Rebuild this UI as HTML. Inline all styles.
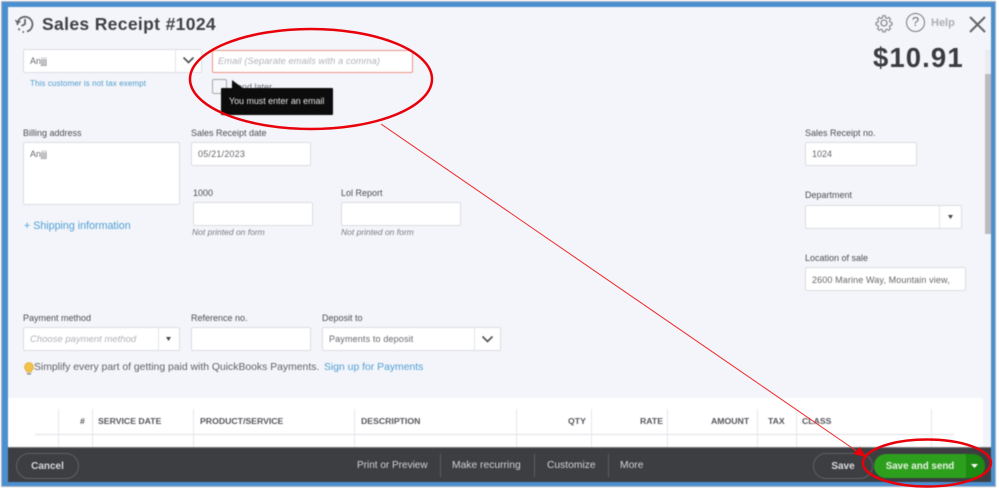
<!DOCTYPE html>
<html>
<head>
<meta charset="utf-8">
<style>
html,body{margin:0;padding:0;background:#fff}
#p{position:relative;width:999px;height:488px;overflow:hidden;background:#fff;font-family:"Liberation Sans",sans-serif;color:#6b6c72}
#f{position:absolute;left:0;top:0;width:999px;height:488px;filter:blur(.5px)}
.a{position:absolute;white-space:nowrap}
.i{position:absolute;box-sizing:border-box;background:#fff;border:1px solid #dcdde1;border-radius:2px}
.l{position:absolute;white-space:nowrap;font-size:9px;line-height:11px;color:#4c4d53;margin-top:1px}
.t{position:absolute;white-space:nowrap;font-size:9px;line-height:11px;color:#66676d;margin-top:1px}
.h{position:absolute;white-space:nowrap;font-size:8.7px;line-height:11px;font-weight:bold;color:#55565c;top:416px}
.n{position:absolute;white-space:nowrap;font-size:8.5px;font-style:italic;line-height:10px;color:#7a7b81}
.v{position:absolute;width:1px;background:#e6e7ea}
.b{position:absolute;white-space:nowrap;font-size:10.3px;line-height:12px;color:#d2d3d5;top:460px}
.s{position:absolute;width:1px;background:#5c5d60;top:454px;height:23px}
</style>
</head>
<body>
<div id="p">
<div id="f">
<div class="a" style="left:2px;top:2px;width:993px;height:484px;background:#4a8fd0;box-shadow:0 0 0 1px #a9b4bf"></div>
<div class="a" style="left:8px;top:7px;width:976px;height:440px;background:#f4f5fa"></div>
<div class="a" style="left:984px;top:7px;width:7px;height:440px;background:#f4f5fa"></div>
<div class="a" style="left:985px;top:74px;width:6px;height:160px;background:#bcbcbe"></div>
<div class="a" style="left:985px;top:50px;width:6px;height:24px;background:#ececee"></div>
<div class="a" style="left:8px;top:398px;width:975px;height:49px;background:#fff"></div>

<svg class="a" style="left:14px;top:13px" width="21" height="21" viewBox="0 0 21 21" fill="none" stroke="#5e5f64" stroke-width="1.7"><path d="M3.500 12A7.500 7.500 0 1 1 13 18.500"/><path d="M3 9.500 1.500 7M3.500 10 6.500 8.500" stroke-width="1.300"/><path d="M11 6v5l-3.500 2"/><path d="M4.500 15.500l1.500 2M8.500 19h1.500" stroke-dasharray="2 1.500"/></svg>
<div class="a" style="left:42px;top:13px;font-size:17.5px;line-height:22px;font-weight:bold;color:#404146;letter-spacing:.35px">Sales Receipt #1024</div>

<svg class="a" style="left:874px;top:13px" width="20" height="20" viewBox="0 0 20 20" fill="none" stroke="#77787d" stroke-width="1.100"><circle cx="10" cy="10" r="3"/><path d="M8.600 2h2.800l.4 2.200 1.600.7 1.900-1.300 2 2-1.300 1.900.7 1.600 2.200.4v2.800l-2.200.4-.7 1.600 1.300 1.900-2 2-1.900-1.300-1.600.7-.4 2.200H8.600l-.4-2.200-1.600-.7-1.900 1.300-2-2 1.300-1.900-.7-1.600-2.200-.4V9.600l2.200-.4.700-1.600-1.300-1.900 2-2 1.900 1.300 1.600-.7z" transform="translate(1 1) scale(.9)"/></svg>
<div class="a" style="left:906px;top:13px;width:19px;height:19px;box-sizing:border-box;border:1.500px solid #77787d;border-radius:50%;text-align:center;font-size:13px;line-height:16px;color:#6a6b70">?</div>
<div class="a" style="left:931px;top:16px;font-size:11px;line-height:14px;font-weight:bold;color:#adaeb2">Help</div>
<svg class="a" style="left:968px;top:15px" width="20" height="20" viewBox="0 0 20 20" stroke="#626368" stroke-width="2" fill="none"><path d="M2 2 17 17M17 2 2 17"/></svg>
<div class="a" style="left:873px;top:42px;font-size:27.500px;line-height:32px;font-weight:bold;color:#3a3b3f;letter-spacing:1.1px">$10.91</div>

<!-- customer -->
<div class="i" style="left:23px;top:49px;width:179px;height:24px"></div>
<div class="a" style="left:175px;top:50px;width:1px;height:22px;background:#e2e3e6"></div>
<svg class="a" style="left:182px;top:56px" width="13" height="9" viewBox="0 0 13 9" fill="none" stroke="#4d4e53" stroke-width="1.600"><path d="M1.500 1.500 6.500 6.500 11.500 1.500"/></svg>
<div class="t" style="left:30px;top:55px">Anjjj</div>
<div class="a" style="left:30px;top:79px;font-size:8px;line-height:10px;color:#4d9ccf;letter-spacing:.1px">This customer is not tax exempt</div>

<!-- email -->
<div class="i" style="left:212px;top:50px;width:201px;height:23px;border:1px solid #ee8f86"></div>
<div class="a" style="left:218px;top:56px;font-size:9.300px;line-height:11px;font-style:italic;color:#b0b1b7;letter-spacing:.08px">Email (Separate emails with a comma)</div>
<div class="i" style="left:212px;top:79px;width:15px;height:15px;border-color:#a5a6aa;background:#f4f5fa"></div>
<div class="t" style="left:231px;top:81px;color:#6a6b70">Send later</div>
<div class="a" style="left:221px;top:88px;width:112px;height:27px;background:#0c0c0c;border-radius:1px"></div>
<svg class="a" style="left:230px;top:80px" width="16" height="11" viewBox="0 0 16 11"><path d="M2 0 14 9 2 10z" fill="#0c0c0c"/></svg>
<div class="a" style="left:229px;top:96px;font-size:8.900px;line-height:11px;color:#e4e4e4">You must enter an email</div>

<!-- billing -->
<div class="l" style="left:23px;top:127px">Billing address</div>
<div class="i" style="left:23px;top:142px;width:157px;height:63px"></div>
<div class="t" style="left:30px;top:148px">Anjjj</div>
<div class="a" style="left:24px;top:220px;font-size:10.700px;line-height:13px;color:#4f9fd4">+ Shipping information</div>

<div class="l" style="left:191px;top:127px">Sales Receipt date</div>
<div class="i" style="left:191px;top:142px;width:120px;height:24px"></div>
<div class="t" style="left:198px;top:148px;letter-spacing:.2px">05/21/2023</div>

<div class="l" style="left:193px;top:187px">1000</div>
<div class="i" style="left:193px;top:202px;width:120px;height:24px"></div>
<div class="n" style="left:192px;top:227px">Not printed on form</div>

<div class="l" style="left:341px;top:187px">Lol Report</div>
<div class="i" style="left:341px;top:202px;width:120px;height:24px"></div>
<div class="n" style="left:341px;top:227px">Not printed on form</div>

<!-- right -->
<div class="l" style="left:805px;top:127px">Sales Receipt no.</div>
<div class="i" style="left:805px;top:142px;width:112px;height:24px"></div>
<div class="t" style="left:812px;top:148px">1024</div>
<div class="l" style="left:805px;top:189px">Department</div>
<div class="i" style="left:805px;top:205px;width:157px;height:24px"></div>
<div class="a" style="left:939px;top:206px;width:1px;height:22px;background:#e2e3e6"></div>
<svg class="a" style="left:947px;top:215px" width="7" height="5"><path d="M1 0h5L3.500 4z" fill="#45464a"/></svg>
<div class="l" style="left:805px;top:252px">Location of sale</div>
<div class="i" style="left:805px;top:267px;width:161px;height:24px"></div>
<div class="t" style="left:812px;top:274px;letter-spacing:.12px">2600 Marine Way, Mountain view,</div>

<!-- payment -->
<div class="l" style="left:23px;top:312px">Payment method</div>
<div class="i" style="left:23px;top:327px;width:157px;height:24px"></div>
<div class="a" style="left:158px;top:328px;width:1px;height:22px;background:#e2e3e6"></div>
<svg class="a" style="left:165px;top:337px" width="7" height="5"><path d="M1 0h5L3.500 4z" fill="#45464a"/></svg>
<div class="a" style="left:30px;top:334px;font-size:9.500px;line-height:11px;font-style:italic;color:#b0b1b7">Choose payment method</div>
<div class="l" style="left:191px;top:312px">Reference no.</div>
<div class="i" style="left:191px;top:327px;width:120px;height:24px"></div>
<div class="l" style="left:322px;top:312px">Deposit to</div>
<div class="i" style="left:322px;top:327px;width:179px;height:24px"></div>
<div class="a" style="left:474px;top:328px;width:1px;height:22px;background:#e2e3e6"></div>
<svg class="a" style="left:481px;top:335px" width="13" height="9" viewBox="0 0 13 9" fill="none" stroke="#4d4e53" stroke-width="1.600"><path d="M1.500 1.500 6.500 6.500 11.500 1.500"/></svg>
<div class="t" style="left:329px;top:333px;letter-spacing:.15px">Payments to deposit</div>

<svg class="a" style="left:24px;top:362px" width="10" height="14" viewBox="0 0 10 14"><path d="M5 .5a4.500 4.500 0 0 0-2.500 8.200V10h5V8.700A4.500 4.500 0 0 0 5 .5z" fill="#f2c14a" stroke="#d6a02c" stroke-width=".6"/><path d="M3 11h4v1.500H3z" fill="#8a8b8f"/></svg>
<div class="a" style="left:34px;top:361px;font-size:10.400px;line-height:13px;color:#606166">Simplify every part of getting paid with QuickBooks Payments.</div>
<div class="a" style="left:324px;top:361px;font-size:10.400px;line-height:13px;color:#4f9fd4">Sign up for Payments</div>

<!-- table -->
<div class="a" style="left:35px;top:434px;width:919px;height:1px;background:#dfe0e3"></div>
<div class="v" style="left:58px;top:409px;height:38px"></div>
<div class="v" style="left:92px;top:409px;height:38px"></div>
<div class="v" style="left:193px;top:409px;height:38px"></div>
<div class="v" style="left:354px;top:409px;height:38px"></div>
<div class="v" style="left:516px;top:409px;height:38px"></div>
<div class="v" style="left:591px;top:409px;height:38px"></div>
<div class="v" style="left:667px;top:409px;height:38px"></div>
<div class="v" style="left:757px;top:409px;height:38px"></div>
<div class="v" style="left:796px;top:409px;height:38px"></div>
<div class="v" style="left:931px;top:409px;height:38px"></div>
<div class="h" style="left:80px">#</div>
<div class="h" style="left:98px">SERVICE DATE</div>
<div class="h" style="left:200px">PRODUCT/SERVICE</div>
<div class="h" style="left:361px">DESCRIPTION</div>
<div class="h" style="left:568px">QTY</div>
<div class="h" style="left:640px">RATE</div>
<div class="h" style="left:711px">AMOUNT</div>
<div class="h" style="left:768px">TAX</div>
<div class="h" style="left:802px">CLASS</div>

<!-- footer -->
<div class="a" style="left:8px;top:447px;width:983px;height:35px;background:#3d3e42;border-top:1px solid #77787a;box-sizing:border-box"></div>
<div class="a" style="left:16px;top:453px;width:63px;height:26px;box-sizing:border-box;border:1px solid #5f6063;border-radius:13px;text-align:center;font-size:10px;line-height:26px;font-weight:bold;color:#d8d8d8">Cancel</div>
<div class="b" style="left:357px;font-size:10px">Print or Preview</div>
<div class="s" style="left:440px"></div>
<div class="b" style="left:452px">Make recurring</div>
<div class="s" style="left:534px"></div>
<div class="b" style="left:547px">Customize</div>
<div class="s" style="left:608px"></div>
<div class="b" style="left:620px">More</div>
<div class="a" style="left:813px;top:453px;width:60px;height:26px;box-sizing:border-box;border:1px solid #5f6063;border-radius:13px;text-align:center;font-size:10px;line-height:26px;font-weight:bold;color:#dcdcdc">Save</div>
<div class="a" style="left:874px;top:454px;width:92px;height:24px;background:#2ca01c;border-radius:12px 0 0 12px;text-align:center;font-size:9.800px;line-height:26px;font-weight:bold;color:#e8f2e4">Save and send</div>
<div class="a" style="left:966px;top:454px;width:19px;height:24px;background:#1d8a12;border-radius:0 12px 12px 0"></div>
<svg class="a" style="left:971px;top:464px" width="8" height="5"><path d="M0 0h7L3.500 4z" fill="#fff"/></svg>
</div>

<!-- annotations -->
<svg class="a" style="left:0;top:0" width="999" height="488" viewBox="0 0 999 488" fill="none">
<ellipse cx="311" cy="79" rx="121" ry="50" stroke="#e8000b" stroke-width="2.500"/>
<ellipse cx="927" cy="463" rx="64" ry="23.500" stroke="#e8000b" stroke-width="2.500"/>
<path d="M381 124 858 452" stroke="#ee2a2a" stroke-width="1"/>
<path d="M860 447 853 454 866 457z" fill="#e8000b"/>
</svg>
</div>
</body>
</html>
